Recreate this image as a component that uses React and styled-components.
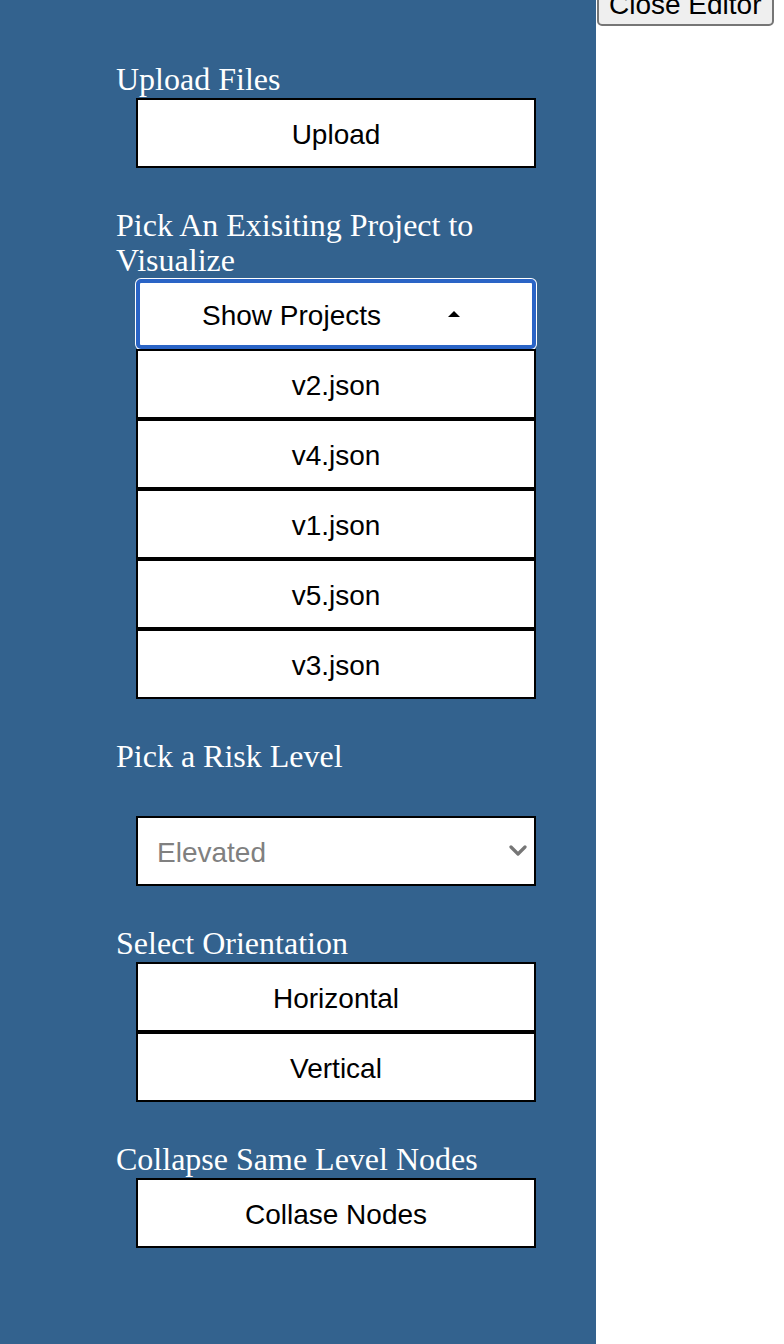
import React, {useState} from 'react';
import styled, {createGlobalStyle} from 'styled-components';

const GlobalStyle = createGlobalStyle`
  body {
    margin: 0;
    background: #ffffff;
    font-family: "Liberation Sans", Arial, sans-serif;
  }
`

let Page = styled.div`
  display: flex;
  align-items: flex-start;
  min-height: 1344px;
  overflow: hidden;
`

let Sidebar = styled.div`
  width: 596px;
  min-height: 1344px;
  flex-shrink: 0;
  background: #33628e;
  padding: 62px 0 0 116px;
  box-sizing: border-box;
  display: flex;
  flex-direction: column;
`

let Section = styled.div`
  display: flex;
  flex-direction: column;
  margin-bottom: 40px;
`

let Heading = styled.h3`
  margin: 0 0 1px 0;
  max-width: 364px;
  font-family: "Liberation Serif", "Times New Roman", serif;
  font-size: 32px;
  line-height: 35px;
  font-weight: normal;
  color: #ffffff;
`

let Button = styled.button`
  display: flex;
  align-items: center;
  justify-content: center;
  width: 400px;
  height: 70px;
  margin-left: 20px;
  padding: 4px 0 0 0;
  box-sizing: border-box;
  background: #ffffff;
  border: 2px solid #000000;
  border-radius: 0;
  font-family: "Liberation Sans", Arial, sans-serif;
  font-size: 28px;
  color: #000000;
  cursor: pointer;
  outline: none;
`

let ToggleButton = styled(Button)`
  border: 4px solid #2a64c6;
  border-radius: 5px;
  box-shadow: 0 0 0 1px #ffffff;
`

let Caret = styled.span`
  width: 0;
  height: 0;
  margin-left: 67px;
  margin-right: 10px;
  margin-bottom: 4px;
  border-left: 6px solid transparent;
  border-right: 6px solid transparent;
  border-bottom: 6px solid #000000;
`

let SelectWrap = styled.div`
  position: relative;
  width: 400px;
  margin: 41px 0 0 20px;
`

let Select = styled.select`
  appearance: none;
  -webkit-appearance: none;
  width: 400px;
  height: 70px;
  box-sizing: border-box;
  padding: 3px 0 0 19px;
  background: #ffffff;
  border: 2px solid #000000;
  border-radius: 0;
  font-family: "Liberation Sans", Arial, sans-serif;
  font-size: 28px;
  color: #808080;
  outline: none;
`

let Chevron = styled.svg`
  position: absolute;
  right: 9px;
  top: 29px;
  pointer-events: none;
`

let Main = styled.div`
  flex: 1;
  padding-left: 1px;
`

let CloseButton = styled.button`
  margin-top: -18px;
  padding: 3px 10px;
  background: #efefef;
  border: 2px solid #767676;
  border-radius: 5px;
  font-family: "Liberation Sans", Arial, sans-serif;
  font-size: 28px;
  color: #000000;
`

const projects = ['v2.json', 'v4.json', 'v1.json', 'v5.json', 'v3.json']

const App = () => {
    const [open, setOpen] = useState(true)
    const [risk, setRisk] = useState('Elevated')

    return (
        <Page>
            <GlobalStyle/>
            <Sidebar>
                <Section>
                    <Heading>Upload Files</Heading>
                    <Button>Upload</Button>
                </Section>

                <Section>
                    <Heading>Pick An Exisiting Project to Visualize</Heading>
                    <ToggleButton onClick={() => setOpen(!open)}>
                        Show Projects
                        <Caret/>
                    </ToggleButton>
                    {open && projects.map((p) => <Button key={p}>{p}</Button>)}
                </Section>

                <Section>
                    <Heading>Pick a Risk Level</Heading>
                    <SelectWrap>
                        <Select value={risk} onChange={(e) => setRisk(e.target.value)}>
                            <option>Elevated</option>
                            <option>Low</option>
                            <option>High</option>
                        </Select>
                        <Chevron width="18" height="11" viewBox="0 0 18 11">
                            <path d="M2 2 L9 9 L16 2" fill="none" stroke="#767676" strokeWidth="3.2"
                                  strokeLinecap="round" strokeLinejoin="round"/>
                        </Chevron>
                    </SelectWrap>
                </Section>

                <Section>
                    <Heading>Select Orientation</Heading>
                    <Button>Horizontal</Button>
                    <Button>Vertical</Button>
                </Section>

                <Section>
                    <Heading>Collapse Same Level Nodes</Heading>
                    <Button>Collase Nodes</Button>
                </Section>
            </Sidebar>
            <Main>
                <CloseButton>Close Editor</CloseButton>
            </Main>
        </Page>
    )
}

export default App;
